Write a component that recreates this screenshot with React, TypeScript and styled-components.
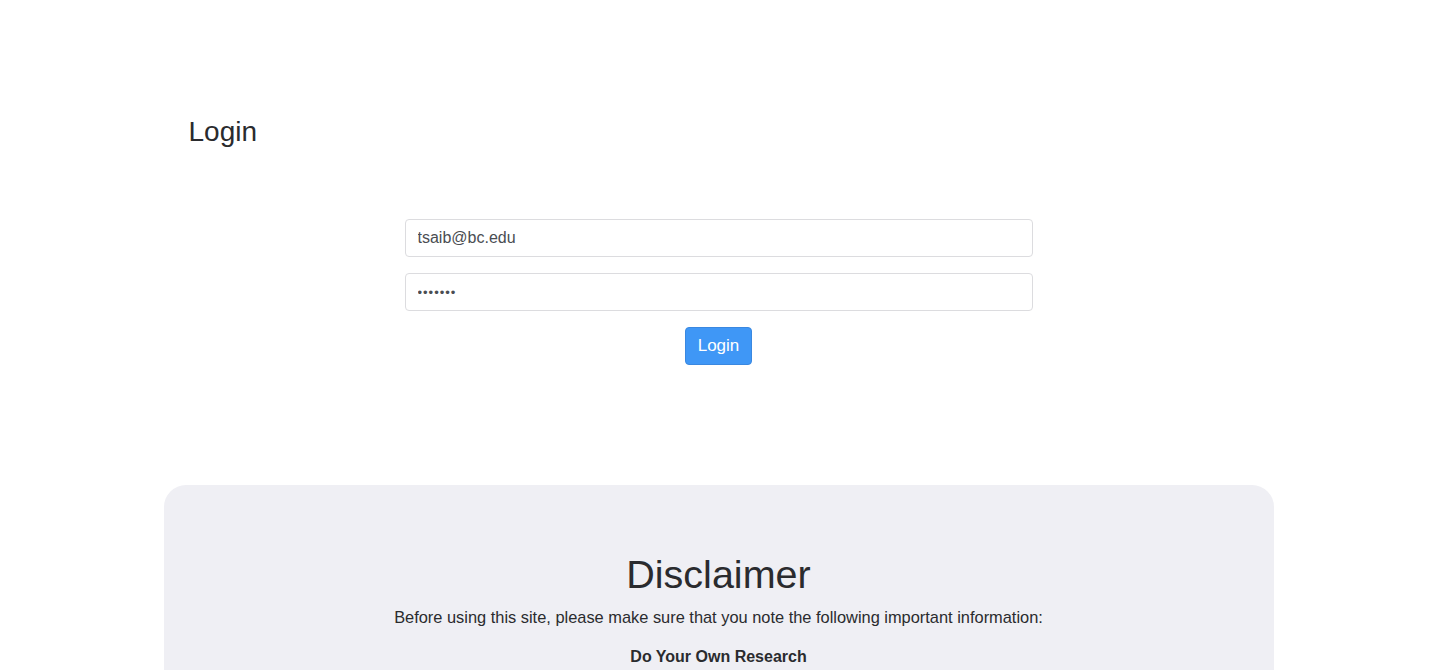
import styled, { createGlobalStyle } from 'styled-components'

const GlobalStyle = createGlobalStyle`
  body {
    margin: 0;
    background: #fff;
    font-family: 'Liberation Sans', Arial, sans-serif;
    color: #212529;
  }
`

const Page = styled.div`
  padding-left: 7px;
`

const Container = styled.div`
  width: 1110px;
  margin: 0 auto;
`

const LoginSection = styled.section`
  padding: 116px 25px 120px;
`

const PageTitle = styled.h2`
  margin: 0;
  font-size: 28px;
  font-weight: 500;
  line-height: 32px;
  color: #2a2b2e;
`

const Form = styled.form`
  width: 628px;
  margin: 71px auto 0;
  display: flex;
  flex-direction: column;
  align-items: center;
  gap: 16px;
`

const Input = styled.input`
  box-sizing: border-box;
  width: 100%;
  height: 38px;
  padding: 0 12px;
  border: 1px solid #dcdcdf;
  border-radius: 4px;
  font-family: inherit;
  font-size: 16px;
  color: #4a4d52;
  background: #fff;
  outline: none;
  &[type='password'] {
    letter-spacing: 1px;
    font-size: 13px;
  }
`

const Button = styled.button`
  box-sizing: border-box;
  height: 38px;
  padding: 0 12px;
  border: 1px solid #3a88e0;
  border-radius: 4px;
  background: #3f97f6;
  color: #fff;
  font-family: inherit;
  font-size: 17px;
  cursor: pointer;
`

const Disclaimer = styled.section`
  background: #efeff4;
  border-radius: 22px;
  padding: 65px 40px 40px;
  text-align: center;
  color: #2a2b2e;
`

const DisclaimerTitle = styled.h1`
  margin: 0;
  font-size: 39.5px;
  font-weight: 400;
  line-height: 48px;
`

const Lead = styled.p`
  margin: 7px 0 0;
  font-size: 16.4px;
  line-height: 24px;
`

const SubHeading = styled.h5`
  margin: 16px 0 0;
  font-size: 16px;
  font-weight: 700;
  line-height: 24px;
`

export default function App() {
  return (
    <>
      <GlobalStyle />
      <Page>
        <Container>
          <LoginSection>
            <PageTitle>Login</PageTitle>
            <Form onSubmit={(e) => e.preventDefault()}>
              <Input type="email" defaultValue="tsaib@bc.edu" />
              <Input type="password" defaultValue="1234567" />
              <Button type="submit">Login</Button>
            </Form>
          </LoginSection>
          <Disclaimer>
            <DisclaimerTitle>Disclaimer</DisclaimerTitle>
            <Lead>Before using this site, please make sure that you note the following important information:</Lead>
            <SubHeading>Do Your Own Research</SubHeading>
          </Disclaimer>
        </Container>
      </Page>
    </>
  )
}
